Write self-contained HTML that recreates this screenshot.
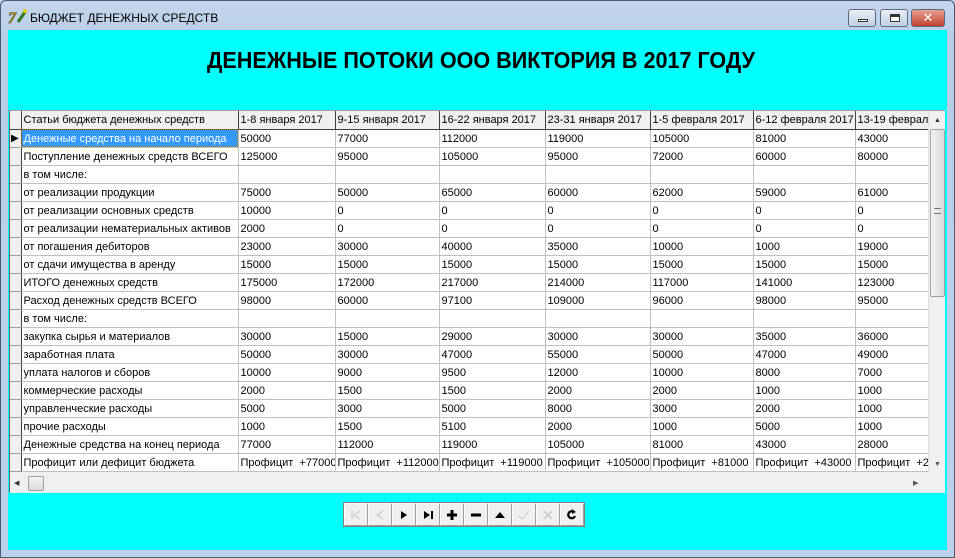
<!DOCTYPE html>
<html><head><meta charset="utf-8"><style>
*{margin:0;padding:0;box-sizing:border-box}
body{width:955px;height:558px;overflow:hidden;background:#b9d1ea;font-family:"Liberation Sans","DejaVu Sans",sans-serif;position:relative}
.frame{position:absolute;left:0;top:0;width:955px;height:558px;background:linear-gradient(#c4d6ec,#b7cde8 40px,#bcd2ec);border:1px solid #4a5a70;border-radius:6px 6px 0 0}
.title{position:absolute;left:30px;top:11px;font-size:12px;color:#000}
.client{position:absolute;left:8px;top:30px;width:939px;height:520px;background:#00ffff}
.grid{position:absolute;left:9px;top:110px;width:936px;height:383px;background:#f0f0f0;border-left:1px solid #696969;border-top:1px solid #a0a0a0;overflow:hidden}
.tw{position:absolute;left:0;top:0;width:918px;height:362px;overflow:hidden}
table{position:absolute;left:0;top:0;width:918px;border-collapse:collapse;font-size:11px;table-layout:fixed}
td{height:18px;border-right:1px solid #c0c0c0;border-bottom:1px solid #c0c0c0;background:#fff;white-space:nowrap;overflow:hidden;padding:2px 0 0 2px;line-height:15px;color:#000}
td.ind{background:#f0f0f0;border-right:1px solid #404040;border-bottom:1px solid #a0a0a0;padding:0}
tr.h td{background:#f0f0f0;border-right:1px solid #404040;border-bottom:1px solid #404040}
td.sel{background:#3399ff;color:#fff;outline:1px dotted #c08000;outline-offset:-1px}
.vs{position:absolute;left:918px;top:0;width:17px;height:364px;background:#f0f0f0;border-left:1px solid #e0e0e0}
.hs{position:absolute;left:0;top:364px;width:918px;height:17px;background:#f0f0f0}
.thumb{position:absolute;background:linear-gradient(90deg,#f4f4f4,#dcdcdc);border:1px solid #a0a0a0;border-radius:2px}
.nav{position:absolute;left:343px;top:502px;height:25px;display:flex;border:1px solid #808080;background:#f0f0f0}
.nav div{width:24px;height:23px;border:1px solid;border-color:#fff #a0a0a0 #a0a0a0 #fff;display:flex;align-items:center;justify-content:center}
.btns{position:absolute;top:9px;height:18px;border:1px solid #5a6a80;border-radius:3px}
</style></head><body>
<div class="frame"></div>
<svg style="position:absolute;left:8px;top:8px" width="20" height="18"><text x="0" y="15" font-size="16" font-weight="bold" font-style="italic" fill="#d4b000" stroke="#444" stroke-width=".6" font-family="Liberation Serif">7</text><path d="M10 14 L17 4" stroke="#2a7a20" stroke-width="3"/><circle cx="17" cy="3" r="2" fill="#e0d000"/></svg>
<div class="title">БЮДЖЕТ ДЕНЕЖНЫХ СРЕДСТВ</div>
<div class="btns" style="left:848px;width:28px;background:linear-gradient(#e8eef6,#c0cfe2)"><div style="position:absolute;left:9px;top:9px;width:10px;height:3px;background:#fff;border:1px solid #333"></div></div>
<div class="btns" style="left:880px;width:28px;background:linear-gradient(#e8eef6,#c0cfe2)"><div style="position:absolute;left:9px;top:4px;width:10px;height:8px;border:1px solid #333;border-top-width:3px;background:#fff"></div></div>
<div class="btns" style="left:911px;width:34px;background:linear-gradient(#e8a090,#c04030);color:#fff;font-weight:bold;font-size:13px;text-align:center;line-height:16px">✕</div>
<div class="client"></div>
<svg style="position:absolute;left:0;top:40px" width="955" height="40"><text x="207" y="28" textLength="548" lengthAdjust="spacingAndGlyphs" font-family="Liberation Sans" font-weight="bold" font-size="23">ДЕНЕЖНЫЕ ПОТОКИ ООО ВИКТОРИЯ В 2017 ГОДУ</text></svg>
<div class="grid">
<div class="tw">
<table>
<colgroup><col style="width:11px"><col style="width:217px"><col style="width:97px"><col style="width:104px"><col style="width:106px"><col style="width:105px"><col style="width:103px"><col style="width:102px"><col style="width:73px"></colgroup>
<tr class="h"><td class="ind"></td><td>Статьи бюджета денежных средств</td><td>1-8 января 2017</td><td>9-15 января 2017</td><td>16-22 января 2017</td><td>23-31 января 2017</td><td>1-5 февраля 2017</td><td>6-12 февраля 2017</td><td>13-19 февраля 2017</td></tr>
<tr><td class="ind" style="font-size:10px;padding-left:1px">▶</td><td class="sel">Денежные средства на начало периода</td><td>50000</td><td>77000</td><td>112000</td><td>119000</td><td>105000</td><td>81000</td><td>43000</td></tr>
<tr><td class="ind"></td><td>Поступление денежных средств ВСЕГО</td><td>125000</td><td>95000</td><td>105000</td><td>95000</td><td>72000</td><td>60000</td><td>80000</td></tr>
<tr><td class="ind"></td><td>в том числе:</td><td></td><td></td><td></td><td></td><td></td><td></td><td></td></tr>
<tr><td class="ind"></td><td>от реализации продукции</td><td>75000</td><td>50000</td><td>65000</td><td>60000</td><td>62000</td><td>59000</td><td>61000</td></tr>
<tr><td class="ind"></td><td>от реализации основных средств</td><td>10000</td><td>0</td><td>0</td><td>0</td><td>0</td><td>0</td><td>0</td></tr>
<tr><td class="ind"></td><td>от реализации нематериальных активов</td><td>2000</td><td>0</td><td>0</td><td>0</td><td>0</td><td>0</td><td>0</td></tr>
<tr><td class="ind"></td><td>от погашения дебиторов</td><td>23000</td><td>30000</td><td>40000</td><td>35000</td><td>10000</td><td>1000</td><td>19000</td></tr>
<tr><td class="ind"></td><td>от сдачи имущества в аренду</td><td>15000</td><td>15000</td><td>15000</td><td>15000</td><td>15000</td><td>15000</td><td>15000</td></tr>
<tr><td class="ind"></td><td>ИТОГО денежных средств</td><td>175000</td><td>172000</td><td>217000</td><td>214000</td><td>117000</td><td>141000</td><td>123000</td></tr>
<tr><td class="ind"></td><td>Расход денежных средств ВСЕГО</td><td>98000</td><td>60000</td><td>97100</td><td>109000</td><td>96000</td><td>98000</td><td>95000</td></tr>
<tr><td class="ind"></td><td>в том числе:</td><td></td><td></td><td></td><td></td><td></td><td></td><td></td></tr>
<tr><td class="ind"></td><td>закупка сырья и материалов</td><td>30000</td><td>15000</td><td>29000</td><td>30000</td><td>30000</td><td>35000</td><td>36000</td></tr>
<tr><td class="ind"></td><td>заработная плата</td><td>50000</td><td>30000</td><td>47000</td><td>55000</td><td>50000</td><td>47000</td><td>49000</td></tr>
<tr><td class="ind"></td><td>уплата налогов и сборов</td><td>10000</td><td>9000</td><td>9500</td><td>12000</td><td>10000</td><td>8000</td><td>7000</td></tr>
<tr><td class="ind"></td><td>коммерческие расходы</td><td>2000</td><td>1500</td><td>1500</td><td>2000</td><td>2000</td><td>1000</td><td>1000</td></tr>
<tr><td class="ind"></td><td>управленческие расходы</td><td>5000</td><td>3000</td><td>5000</td><td>8000</td><td>3000</td><td>2000</td><td>1000</td></tr>
<tr><td class="ind"></td><td>прочие расходы</td><td>1000</td><td>1500</td><td>5100</td><td>2000</td><td>1000</td><td>5000</td><td>1000</td></tr>
<tr><td class="ind"></td><td>Денежные средства на конец периода</td><td>77000</td><td>112000</td><td>119000</td><td>105000</td><td>81000</td><td>43000</td><td>28000</td></tr>
<tr><td class="ind"></td><td>Профицит или дефицит бюджета</td><td>Профицит&nbsp; +77000</td><td>Профицит&nbsp; +112000</td><td>Профицит&nbsp; +119000</td><td>Профицит&nbsp; +105000</td><td>Профицит&nbsp; +81000</td><td>Профицит&nbsp; +43000</td><td>Профицит&nbsp; +28000</td></tr>
</table>
</div>
<div class="vs"><div style="position:absolute;left:5px;top:6px;font-size:7px;color:#333">▲</div><div class="thumb" style="left:1px;top:18px;width:15px;height:168px;background:linear-gradient(90deg,#f4f4f4,#dadada)"><div style="position:absolute;left:3px;top:78px;width:7px;height:6px;border-top:1px solid #777;border-bottom:1px solid #777"></div></div><div style="position:absolute;left:5px;top:350px;font-size:7px;color:#555">▼</div></div>
<div class="hs"><div style="position:absolute;left:4px;top:4px;font-size:7px;color:#333">◀</div><div class="thumb" style="left:18px;top:1px;width:16px;height:15px;background:linear-gradient(#f4f4f4,#dadada)"></div><div style="position:absolute;left:903px;top:4px;font-size:7px;color:#555">▶</div></div>
</div>
<div class="nav">
<div><svg width="12" height="12"><path d="M2 2V10M10 2L4 6L10 10" stroke="#c0c0c0" fill="none"/></svg></div>
<div><svg width="12" height="12"><path d="M9 2L3 6L9 10" stroke="#c0c0c0" fill="none"/></svg></div>
<div><svg width="12" height="12"><path d="M3 2L9 6L3 10Z" fill="#000"/></svg></div>
<div><svg width="12" height="12"><path d="M2 2L8 6L2 10Z" fill="#000"/><rect x="9" y="2" width="2" height="8"/></svg></div>
<div><svg width="12" height="12"><path d="M6 1V11M1 6H11" stroke="#000" stroke-width="3"/></svg></div>
<div><svg width="12" height="12"><path d="M1 6H11" stroke="#000" stroke-width="3"/></svg></div>
<div><svg width="12" height="12"><path d="M1 9L6 3L11 9Z" fill="#000"/></svg></div>
<div><svg width="12" height="12"><path d="M1 7L4 10L11 2" stroke="#c8c8c8" fill="none"/></svg></div>
<div><svg width="12" height="12"><path d="M2 2L10 10M10 2L2 10" stroke="#c8c8c8" stroke-width="1.5"/></svg></div>
<div><svg width="12" height="12"><path d="M9 7A3.5 3.5 0 1 1 7 2.5" stroke="#000" stroke-width="2.2" fill="none"/><path d="M6 0L10 3L6 5Z"/></svg></div>
</div>
</body></html>
